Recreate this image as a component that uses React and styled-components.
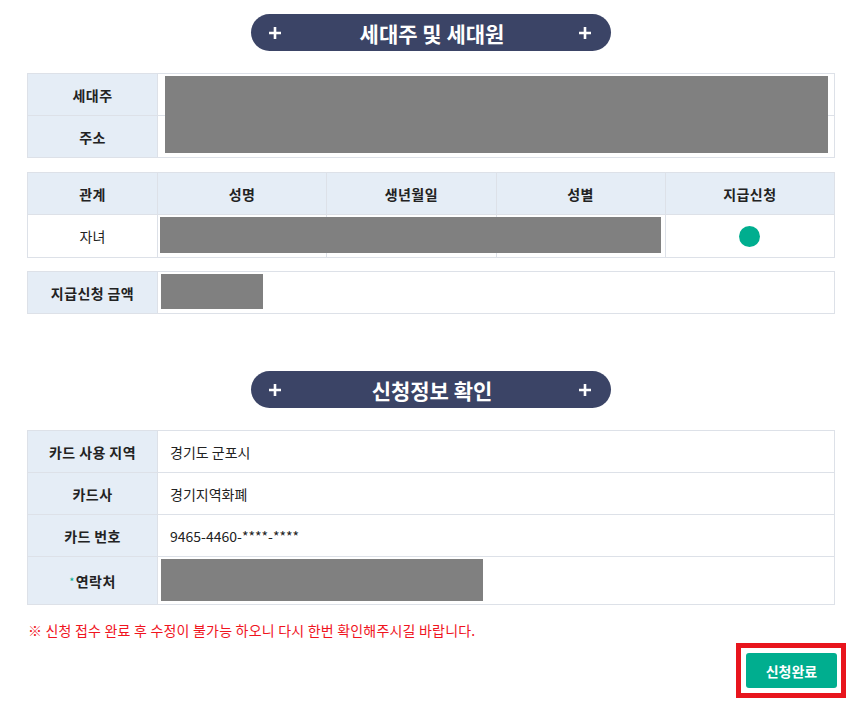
import React from 'react';
import styled, { createGlobalStyle } from 'styled-components';

const GlobalStyle = createGlobalStyle`
    body {
        margin:0;
        background:#fff;
        font-family:"Noto Sans CJK KR", "Noto Sans", sans-serif;
        color:#222;
    }
`;

const members = [
    { relation: '자녀', applied: true },
];

const cardInfo = [
    { label: '카드 사용 지역', value: '경기도 군포시' },
    { label: '카드사', value: '경기지역화폐' },
    { label: '카드 번호', value: '9465-4460-****-****' },
];

const PlusIcon = () => (
    <svg width="12" height="12" viewBox="0 0 12 12">
        <path d="M6 1v10M1 6h10" stroke="#fff" strokeWidth="2.6" strokeLinecap="square" />
    </svg>
);

const SectionTitle = ({ children }) => (
    <Pill>
        <PlusIcon />
        <PillText>{children}</PillText>
        <PlusIcon />
    </Pill>
);

export default function App() {
    return (
        <Page>
            <GlobalStyle />
            <Content>
                <SectionTitle>세대주 및 세대원</SectionTitle>

                <Table $cols="129px 1fr" $mt={22}>
                    <Label>세대주</Label>
                    <Value />
                    <Label>주소</Label>
                    <Value />
                    <Redact $l={137} $t={2} $w={663} $h={77} />
                </Table>

                <Table $cols="129px repeat(4, 1fr)" $mt={14}>
                    <Label>관계</Label>
                    <Label>성명</Label>
                    <Label>생년월일</Label>
                    <Label>성별</Label>
                    <Label>지급신청</Label>
                    {members.map((m, i) => (
                        <React.Fragment key={i}>
                            <Cell $h={42}>{m.relation}</Cell>
                            <Cell $h={42} />
                            <Cell $h={42} />
                            <Cell $h={42} />
                            <Cell $h={42}>{m.applied && <Dot />}</Cell>
                        </React.Fragment>
                    ))}
                    <Redact $l={132} $t={44} $w={501} $h={36} />
                </Table>

                <Table $cols="129px 1fr" $mt={13}>
                    <Label>지급신청 금액</Label>
                    <Value />
                    <Redact $l={133} $t={2} $w={102} $h={35} />
                </Table>

                <Spacer />

                <SectionTitle>신청정보 확인</SectionTitle>

                <Table $cols="129px 1fr" $mt={22}>
                    {cardInfo.map((row) => (
                        <React.Fragment key={row.label}>
                            <Label>{row.label}</Label>
                            <Value>{row.value}</Value>
                        </React.Fragment>
                    ))}
                    <Label $h={47}><Star>*</Star>연락처</Label>
                    <Value $h={47} />
                    <Redact $l={133} $t={128} $w={322} $h={42} />
                </Table>

                <Notice>※ 신청 접수 완료 후 수정이 불가능 하오니 다시 한번 확인해주시길 바랍니다.</Notice>
            </Content>

            <ButtonRow>
                <Highlight>
                    <SubmitButton>신청완료</SubmitButton>
                </Highlight>
            </ButtonRow>
        </Page>
    );
}

const Page = styled.div`
    width:866px;
    padding:14px 20px 20px 27px;
    box-sizing:border-box;
`;

const Content = styled.div`
    width:808px;
`;

const Pill = styled.div`
    display:flex;
    align-items:center;
    justify-content:space-between;
    width:360px;
    height:37px;
    margin:0 auto;
    padding:0 20px 0 18px;
    box-sizing:border-box;
    border-radius:19px;
    background:#3b4466;
`;

const PillText = styled.span`
    color:#fff;
    font-size:21px;
    font-weight:700;
    margin-left:4px;
`;

const Table = styled.div`
    position:relative;
    display:grid;
    grid-template-columns:${props => props.$cols};
    gap:1px;
    margin-top:${props => props.$mt}px;
    border:1px solid #dde1e8;
    background:#dde1e8;
`;

const Label = styled.div`
    display:flex;
    align-items:center;
    justify-content:center;
    height:${props => props.$h || 41}px;
    background:#e5edf6;
    font-size:14px;
    font-weight:700;
    color:#222;
    letter-spacing:0.4px;
`;

const Value = styled.div`
    display:flex;
    align-items:center;
    height:${props => props.$h || 41}px;
    padding-left:12px;
    background:#fff;
    font-size:14px;
    color:#222;
`;

const Cell = styled.div`
    display:flex;
    align-items:center;
    justify-content:center;
    height:${props => props.$h || 41}px;
    background:#fff;
    font-size:14px;
    color:#222;
`;

const Redact = styled.div`
    position:absolute;
    left:${props => props.$l}px;
    top:${props => props.$t}px;
    width:${props => props.$w}px;
    height:${props => props.$h}px;
    background:#808080;
`;

const Dot = styled.span`
    display:block;
    width:21px;
    height:21px;
    border-radius:50%;
    background:#00ae8f;
`;

const Star = styled.span`
    color:#00ae8f;
    font-weight:400;
    font-size:11px;
    margin-right:1px;
`;

const Spacer = styled.div`
    height:57px;
`;

const Notice = styled.p`
    margin:15px 0 0 1px;
    line-height:20px;
    font-size:14px;
    letter-spacing:0.2px;
    color:#f0141e;
`;

const ButtonRow = styled.div`
    display:flex;
    justify-content:flex-end;
    margin-top:3px;
`;

const Highlight = styled.div`
    padding:5px 4px 5px 5px;
    border:5px solid #e8151d;
`;

const SubmitButton = styled.button`
    display:block;
    width:91px;
    height:35px;
    border:0;
    border-radius:3px;
    background:#00ae8f;
    color:#fff;
    font-family:inherit;
    font-size:14px;
    font-weight:700;
    cursor:pointer;
`;
